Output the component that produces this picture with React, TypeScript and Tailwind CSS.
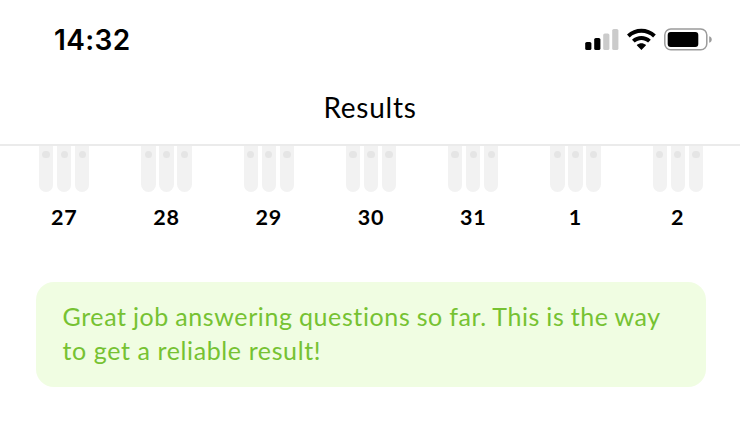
const days = ['27', '28', '29', '30', '31', '1', '2'];

function StatusIcons() {
  return (
    <svg width="130" height="24" viewBox="584 27 130 24">
      <rect x="585.2" y="42" width="6.2" height="8" rx="1.6" />
      <rect x="594.2" y="38" width="6.2" height="12" rx="1.6" />
      <rect x="603.2" y="33.5" width="6.2" height="16.5" rx="1.6" fill="#cbcbcb" />
      <rect x="612.2" y="29" width="6.2" height="21" rx="1.6" fill="#cbcbcb" />
      <path d="M627 34.6C634.9 26.8 647.9 26.8 655.8 34.6L653.1 37.5C646.6 31.3 636.2 31.3 629.7 37.5Z" />
      <path d="M632 39.7C637.2 34.8 645.6 34.8 650.8 39.7L648.1 42.5C644.3 39.1 638.5 39.1 634.7 42.5Z" />
      <path d="M637 44.8C639.5 42.7 643.3 42.7 645.8 44.8Q646.2 45.2 645.8 45.6L641.4 50L637 45.6Q636.6 45.2 637 44.8Z" />
      <rect x="664.8" y="29" width="42" height="20.8" rx="6" fill="none" stroke="#9b9b9b" strokeWidth="1.5" />
      <rect x="667.7" y="31.9" width="30.6" height="15.2" rx="3" />
      <path d="M709.2 36.2C712.6 37.2 712.6 41.8 709.2 42.8Z" fill="#9b9b9b" />
    </svg>
  );
}

function Day({ label }: { label: string }) {
  return (
    <div className="flex w-[50.5px] flex-col items-center">
      <div className="flex gap-[3.8px]">
        {[0, 1, 2].map((bar) => (
          <div key={bar} className="flex h-[46px] w-[14.3px] justify-center rounded-b-full bg-[#f2f2f2] pt-[5px]">
            <div className="size-[7.4px] rounded-full bg-[#e5e5e5]" />
          </div>
        ))}
      </div>
      <div className="mt-3 text-[21.5px] leading-[27px] font-bold tracking-[0.8px]">{label}</div>
    </div>
  );
}

export default function App() {
  return (
    <main className="h-[440px] w-[740px] overflow-hidden bg-white font-['Lato',sans-serif] text-black">
      <header className="h-[146px] border-b-2 border-[#ebebeb]">
        <div className="flex h-20 items-start justify-between pr-[26px] pl-[54px] pt-[27px]">
          <time className="-mt-1 font-['Inter',sans-serif] text-[28px] leading-[34px] font-semibold tracking-[0.4px]">14:32</time>
          <StatusIcons />
        </div>
        <h1 className="pt-[9px] text-center text-[28px] leading-9 tracking-[0.75px]">Results</h1>
      </header>
      <section className="flex justify-between pr-[37px] pl-[39px]">
        {days.map((day) => (
          <Day key={day} label={day} />
        ))}
      </section>
      <section className="mt-[51px] mr-[34px] ml-9 h-[105px] rounded-[18px] bg-[#f0fde2] pt-[17px] pl-[26.5px] text-[25px] leading-[34px] text-[#76c232]">
        <p className="tracking-[0.61px] whitespace-nowrap [word-spacing:-0.7px]">Great job answering questions so far. This is the way</p>
        <p className="tracking-[0.61px] whitespace-nowrap">to get a reliable result!</p>
      </section>
    </main>
  );
}
